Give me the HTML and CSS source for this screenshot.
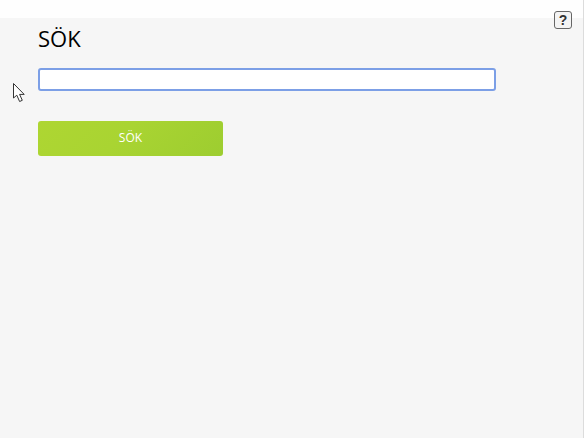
FILE: index.html
```html
<!DOCTYPE html>
<html>
<head>
    <title>Sök</title>
    <link rel="stylesheet" href="styles.css">
</head>
<body>
    <div class="top-bar"></div>
    <button class="help-btn">?</button>
    <svg class="cursor" width="14" height="21" viewBox="0 0 14 21">
        <path d="M1.5 1.5V16L4.8 13.2L7.6 19.5L10.3 18.3L7.6 12.4H12.2Z" fill="#fff" stroke="#333" stroke-width="1"/>
    </svg>
    <div class="content">
        <h1 class="title">SÖK</h1>
        <input class="search-input" type="text">
        <button class="search-btn">SÖK</button>
    </div>
</body>
</html>
```

FILE: styles.css
```css
html, body { height: 100%; }
body { box-sizing: border-box; margin: 0; background-color: #f6f6f6; border-right: 1px solid #dcdcdc; font-family: "Open Sans", Arial, sans-serif; overflow: hidden; }
.top-bar { height: 18px; background-color: #fefefe; }
.content { padding: 6px 0 0 38px; }
.title { margin: 0; font-size: 22px; font-weight: normal; line-height: 28px; color: #000; }
.search-input { display: block; box-sizing: border-box; width: 458px; height: 23px; margin-top: 16px; padding: 0 4px; background-color: #fff; border: 2px solid #7c9fe6; border-radius: 3px; outline: none; }
.search-btn { display: block; width: 185px; height: 35px; margin-top: 30px; padding: 0 0 2px; color: #fff; font-family: "Open Sans", Arial, sans-serif; font-size: 12px; border: none; border-radius: 3px; background: linear-gradient(135deg, #aed632 0%, #a9d432 45%, #9dcd30 100%); }
.help-btn { position: absolute; top: 11px; left: 554px; box-sizing: border-box; width: 18px; height: 18px; padding: 0; color: #333; font-family: "Liberation Sans", Arial, sans-serif; font-size: 14px; font-weight: bold; line-height: 15px; background-color: #f4f4f4; border: 1px solid #666; border-radius: 3px; }
.cursor { position: absolute; top: 82px; left: 12px; }
```
